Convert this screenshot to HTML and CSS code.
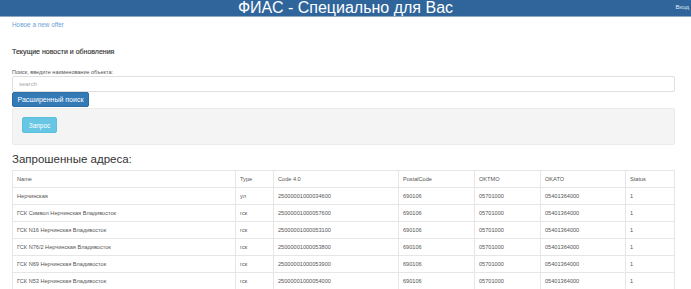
FILE: index.html
```html
<!DOCTYPE html>
<html lang="ru">
<head>
    <meta charset="UTF-8">
    <title>ФИАС - Специально для Вас</title>
    <link rel="stylesheet" href="styles.css">
</head>
<body>

<div class="topbar">
    <div class="brand">ФИАС - Специально для Вас</div>
    <a class="login" href="#">Вход</a>
</div>

<div class="container">
    <a class="offer" href="#">Новое a new offer</a>

    <div class="news">Текущие новости и обновления</div>

    <form class="search-form">
        <label for="search">Поиск, введите наименование объекта:</label>
        <input type="text" id="search" placeholder="search">
        <button type="button" class="btn btn-primary">Расширенный поиск</button>
        <div class="well">
            <button type="button" class="btn btn-info">Запрос</button>
        </div>
    </form>

    <h3>Запрошенные адреса:</h3>

    <table class="addresses">
        <colgroup>
            <col style="width: 223px">
            <col style="width: 38px">
            <col style="width: 125px">
            <col style="width: 76px">
            <col style="width: 66px">
            <col style="width: 85px">
            <col style="width: 49px">
        </colgroup>
        <thead>
            <tr>
                <th>Name</th>
                <th>Type</th>
                <th>Code 4.0</th>
                <th>PostalCode</th>
                <th>OKTMO</th>
                <th>OKATO</th>
                <th>Status</th>
            </tr>
        </thead>
        <tbody>
            <tr>
                <td>Нерчинская</td>
                <td>ул</td>
                <td>25000001000034600</td>
                <td>690106</td>
                <td>05701000</td>
                <td>05401364000</td>
                <td>1</td>
            </tr>
            <tr>
                <td>ГСК Символ Нерчинская Владивосток</td>
                <td>гск</td>
                <td>25000001000057600</td>
                <td>690106</td>
                <td>05701000</td>
                <td>05401364000</td>
                <td>1</td>
            </tr>
            <tr>
                <td>ГСК N16 Нерчинская Владивосток</td>
                <td>гск</td>
                <td>25000001000053100</td>
                <td>690106</td>
                <td>05701000</td>
                <td>05401364000</td>
                <td>1</td>
            </tr>
            <tr>
                <td>ГСК N76/2 Нерчинская Владивосток</td>
                <td>гск</td>
                <td>25000001000053800</td>
                <td>690106</td>
                <td>05701000</td>
                <td>05401364000</td>
                <td>1</td>
            </tr>
            <tr>
                <td>ГСК N69 Нерчинская Владивосток</td>
                <td>гск</td>
                <td>25000001000053900</td>
                <td>690106</td>
                <td>05701000</td>
                <td>05401364000</td>
                <td>1</td>
            </tr>
            <tr>
                <td>ГСК N53 Нерчинская Владивосток</td>
                <td>гск</td>
                <td>25000001000054000</td>
                <td>690106</td>
                <td>05701000</td>
                <td>05401364000</td>
                <td>1</td>
            </tr>
        </tbody>
    </table>
</div>

</body>
</html>
```

FILE: styles.css
```css
body {
    margin: 0;
    font-family: "Liberation Sans", Arial, sans-serif;
    font-size: 7px;
    color: #333;
    background-color: #fff;
}
.topbar {
    display: flex;
    justify-content: center;
    align-items: center;
    position: relative;
    height: 16px;
    background-color: #30659b;
    border-bottom: 1px solid #8fa9c4;
}
.brand {
    color: #fff;
    font-size: 16px;
    line-height: 16px;
}
.login {
    position: absolute;
    right: 2px;
    top: 4px;
    color: #dfe8f2;
    font-size: 6px;
    text-decoration: none;
}
.container {
    width: 663px;
    padding: 0 16px 0 12px;
}
.offer {
    display: block;
    margin-top: 4px;
    color: #6a9fd4;
    font-size: 6.4px;
    line-height: 8px;
    text-decoration: none;
}
.news {
    margin-top: 19px;
    font-size: 7px;
    line-height: 8px;
    color: #333;
    -webkit-text-stroke: 0.15px #333;
}
.search-form {
    display: flex;
    flex-direction: column;
    align-items: flex-start;
    margin-top: 12px;
}
label {
    font-size: 5.5px;
    line-height: 8px;
    color: #555;
}
input[type="text"] {
    box-sizing: border-box;
    width: 663px;
    height: 16px;
    margin: 0;
    padding: 0 6px;
    border: 1px solid #e0e0e0;
    border-radius: 2px;
    font-family: inherit;
    font-size: 6px;
    color: #555;
}
input[type="text"]::placeholder {
    color: #aaa;
}
.btn {
    box-sizing: border-box;
    border: 1px solid transparent;
    border-radius: 2px;
    color: #fff;
    font-family: inherit;
    padding: 0;
    cursor: pointer;
}
.btn-primary {
    height: 15px;
    width: 77px;
    font-size: 7px;
    background-color: #337ab7;
    border-color: #2e6da4;
}
.btn-info {
    height: 16px;
    width: 35px;
    font-size: 6.5px;
    background-color: #67c6e3;
    border-color: #5bc0de;
}
.well {
    box-sizing: border-box;
    width: 663px;
    height: 37px;
    margin-top: 1px;
    padding: 8px 9px;
    background-color: #f4f4f4;
    border: 1px solid #ebebeb;
    border-radius: 2px;
}
h3 {
    margin: 7px 0 0;
    font-size: 11.5px;
    line-height: 14px;
    font-weight: normal;
    color: #333;
}
.addresses {
    margin-top: 4px;
    width: 662px;
    border-collapse: collapse;
    table-layout: fixed;
}
.addresses th,
.addresses td {
    height: 16px;
    padding: 0 4px;
    border: 1px solid #e6e6e6;
    font-size: 5.6px;
    font-weight: normal;
    text-align: left;
    color: #555;
    white-space: nowrap;
    overflow: hidden;
}
```
